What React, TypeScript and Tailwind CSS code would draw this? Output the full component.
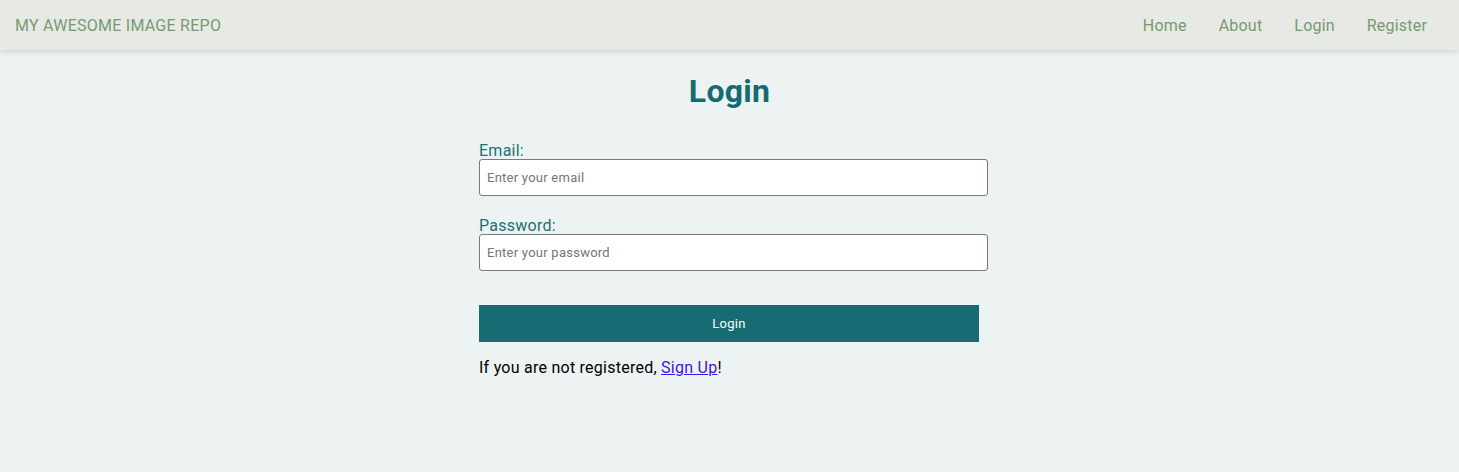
export default function App() {
  return (
    <div className="min-h-[472px] bg-[#edf3f2] font-['Roboto',sans-serif] tracking-[0.25px]">
      <nav className="flex h-[50px] items-center justify-between bg-[#e7e9e4] pl-[15px] pr-8 pt-[2px] shadow-[0_2px_6px_rgba(0,0,0,0.12)]">
        <span className="text-[16px] text-[#789a70]">MY AWESOME IMAGE REPO</span>
        <div className="flex items-center gap-[32px] text-[16px] tracking-[0.2px] text-[#789a70]">
          <a>Home</a>
          <a>About</a>
          <a>Login</a>
          <a>Register</a>
        </div>
      </nav>

      <div className="flex flex-col items-center">
        <h1 className="mt-[21px] text-[32px] leading-[40px] font-bold text-[#166b70]">Login</h1>

        <form className="mt-[32px] w-[501px]" onSubmit={(e) => e.preventDefault()}>
          <label className="block text-[16px] leading-[16px] text-[#1b7174]">Email:</label>
          <input
            type="email"
            placeholder="Enter your email"
            className="block h-[37px] w-[509px] rounded-[3px] border border-[#7a7a7a] bg-white px-[7px] text-[13px] text-black placeholder:text-[#767676] outline-none"
          />

          <label className="mt-[22px] block text-[16px] leading-[16px] text-[#1b7174]">Password:</label>
          <input
            type="password"
            placeholder="Enter your password"
            className="block h-[37px] w-[509px] rounded-[3px] border border-[#7a7a7a] bg-white px-[7px] text-[13px] text-black placeholder:text-[#767676] outline-none"
          />

          <button
            type="submit"
            className="mt-[34px] block h-[37px] w-[500px] bg-[#176b72] text-[13px] text-white"
          >
            Login
          </button>

          <p className="mt-[17px] text-[16px] leading-[18px] text-black">
            If you are not registered,{" "}
            <a href="#" className="text-[#3f12ee] underline">
              Sign Up
            </a>
            !
          </p>
        </form>
      </div>
    </div>
  );
}
